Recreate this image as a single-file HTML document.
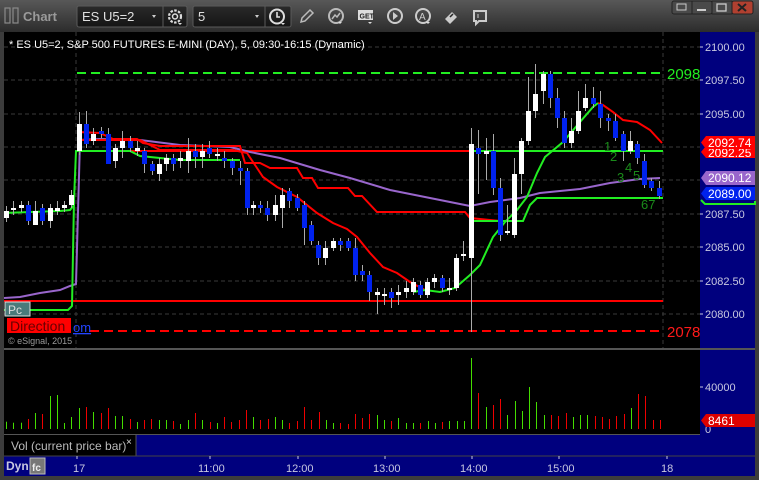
<!DOCTYPE html>
<html><head><meta charset="utf-8"><style>
html,body{margin:0;padding:0;background:#3a3a3a;width:759px;height:480px;overflow:hidden;font-family:"Liberation Sans",sans-serif}
svg{display:block}
</style></head><body>
<svg id="s" width="759" height="480" xmlns="http://www.w3.org/2000/svg" font-family="Liberation Sans, sans-serif">
<defs>
<linearGradient id="tb" x1="0" y1="0" x2="0" y2="1"><stop offset="0" stop-color="#585858"/><stop offset="1" stop-color="#2c2c2c"/></linearGradient>
<linearGradient id="bx" x1="0" y1="0" x2="0" y2="1"><stop offset="0" stop-color="#2a2a2a"/><stop offset="1" stop-color="#151515"/></linearGradient>
</defs>
<rect x="0" y="0" width="759" height="480" fill="#3c3c3c"/>
<rect x="0" y="0" width="759" height="32" fill="url(#tb)"/>
<!-- title -->
<rect x="5" y="8" width="5" height="15" fill="none" stroke="#8a8a8a" stroke-width="1.2"/>
<rect x="13" y="8" width="5" height="15" fill="none" stroke="#8a8a8a" stroke-width="1.2"/>
<text x="23" y="21" fill="#9a9a9a" font-size="13" font-weight="bold">Chart</text>
<rect x="77" y="6" width="110" height="21" rx="2" fill="url(#bx)" stroke="#5a5a5a"/>
<line x1="163" y1="6" x2="163" y2="27" stroke="#5a5a5a"/>
<text x="82" y="21" fill="#e0e0e0" font-size="13">ES U5=2</text>
<path d="M152 15l4 0-2 3z" fill="#ccc"/>
<circle cx="175" cy="16.5" r="6" fill="none" stroke="#ddd" stroke-width="2.2" stroke-dasharray="2.5 1.4"/><circle cx="175" cy="16.5" r="2.5" fill="none" stroke="#ddd" stroke-width="1.5"/>
<path d="M178 23l4 0-2 2z" fill="#ddd"/>
<rect x="193" y="6" width="98" height="21" rx="2" fill="url(#bx)" stroke="#5a5a5a"/>
<line x1="265" y1="6" x2="265" y2="27" stroke="#5a5a5a"/>
<text x="198" y="21" fill="#e0e0e0" font-size="13">5</text>
<path d="M255 15l4 0-2 3z" fill="#ccc"/>
<circle cx="277" cy="16.5" r="7" fill="none" stroke="#ddd" stroke-width="2"/><path d="M277 12v5h3" fill="none" stroke="#ddd" stroke-width="1.6"/>
<path d="M281 23l4 0-2 2z" fill="#ddd"/>
<path d="M301 22l1-4 8-8 3 3-8 8z" fill="none" stroke="#bbb" stroke-width="1.5"/>
<circle cx="336" cy="16" r="7" fill="none" stroke="#bbb" stroke-width="2"/><path d="M332 19l3-4 2 2 3-4" fill="none" stroke="#bbb" stroke-width="1.5"/><path d="M338 22l4 0-2 2z" fill="#ddd"/>
<rect x="358" y="10" width="15" height="10" fill="#ddd"/><text x="359.5" y="18.5" font-size="7" font-weight="bold" fill="#222">GET</text><path d="M368 22l4 0-2 2z" fill="#ddd"/>
<circle cx="395" cy="16" r="7" fill="none" stroke="#ccc" stroke-width="2"/><path d="M393 12v8l5-4z" fill="#ccc"/>
<circle cx="423" cy="16" r="7" fill="none" stroke="#ccc" stroke-width="2"/><text x="419" y="20" font-size="10" fill="#ccc">A</text><path d="M426 22l4 0-2 2z" fill="#ddd"/>
<path d="M445 19l7-7 5 5-7 7z" fill="#ccc"/><path d="M450 17l3-3" stroke="#222" stroke-width="1.5"/>
<path d="M474 11h12v10h-7l-3 3v-3h-2z" fill="none" stroke="#ccc" stroke-width="2"/><line x1="478" y1="14" x2="478" y2="18" stroke="#ccc"/>
<!-- window buttons -->
<rect x="672" y="1" width="40" height="13" rx="2" fill="#4a4a4a" stroke="#222"/>
<line x1="692" y1="1" x2="692" y2="14" stroke="#222"/>
<rect x="712" y="1" width="20" height="13" fill="#4a4a4a" stroke="#222"/>
<rect x="732" y="1" width="21" height="13" rx="2" fill="#b04030" stroke="#222"/>
<rect x="677" y="4" width="9" height="6" fill="none" stroke="#ccc"/>
<line x1="697" y1="10" x2="706" y2="10" stroke="#ccc" stroke-width="2"/>
<rect x="717" y="4" width="9" height="7" fill="none" stroke="#ccc" stroke-width="1.3"/>
<path d="M738 4l8 7M746 4l-8 7" stroke="#222" stroke-width="2"/>

<!-- chart panel -->
<rect x="4" y="32" width="696" height="316" fill="#000"/>
<rect x="700" y="32" width="55" height="424" fill="#00007e"/>
<rect x="755" y="32" width="4" height="448" fill="#3c3c3c"/>
<g stroke="#3a3a3a" stroke-dasharray="4 3" stroke-width="1">
<line x1="4" y1="47" x2="700" y2="47"/><line x1="4" y1="80" x2="700" y2="80"/><line x1="4" y1="114" x2="700" y2="114"/><line x1="4" y1="147" x2="700" y2="147"/><line x1="4" y1="180" x2="700" y2="180"/><line x1="4" y1="214" x2="700" y2="214"/><line x1="4" y1="247" x2="700" y2="247"/><line x1="4" y1="281" x2="700" y2="281"/><line x1="4" y1="314" x2="700" y2="314"/>
<line x1="76" y1="32" x2="76" y2="348"/><line x1="663" y1="32" x2="663" y2="348"/>
<line x1="4" y1="387" x2="700" y2="387"/><line x1="4" y1="429" x2="700" y2="429"/>
<line x1="76" y1="350" x2="76" y2="434"/><line x1="663" y1="350" x2="663" y2="434"/>
</g>
<text x="9" y="48" fill="#fff" font-size="11">* ES U5=2, S&amp;P 500 FUTURES E-MINI (DAY), 5, 09:30-16:15 (Dynamic)</text>

<g id="ind" fill="none" stroke-width="2">
<line x1="77" y1="73" x2="663" y2="73" stroke="#22ee22" stroke-dasharray="9 5"/>
<line x1="4" y1="301" x2="663" y2="301" stroke="#ff0000"/>
<line x1="90" y1="331" x2="663" y2="331" stroke="#ff0000" stroke-dasharray="9 5"/>
<line x1="77" y1="151" x2="663" y2="151" stroke="#ff0000"/>
<polyline stroke="#9966cc" points="4,298 20,297 40,293 60,290 70,286 76,284 80,140 100,139 140,140 180,145 230,147 250,152 280,158 320,170 350,178 390,190 430,198 460,204 470,206 490,202 520,198 540,193 580,189 610,183 640,179 660,178"/>
<polyline stroke="#ff0000" points="78,132 100,133 113,139 137,139 143,143 160,146 233,146 240,146 245,163 260,163 270,168 297,168 303,178 312,178 318,188 348,188 355,196 362,196 377,212 465,212 470,218 500,221"/>
<polyline stroke="#ff0000" points="80,140 140,140 160,150 233,150 247,153 263,177 277,187 297,197 317,213 333,223 347,229 357,237 370,253 383,267 397,273 410,282 425,290"/>
<polyline stroke="#ff0000" points="598,103 603,105 613,112 623,120 637,122 650,130 662,143"/>
<polyline stroke="#22ee22" points="4,310 68,310 72,306 74,200 76,151 130,151 140,156 180,160 225,160 240,160"/>
<polyline stroke="#22ee22" points="4,213 30,212 60,211 70,210 74,205"/>
<polyline stroke="#22ee22" points="413,292 425,290 440,292 455,288 470,275 480,265 493,237 505,222 517,210 527,197 537,173 545,157 563,142 580,122 593,107 598,103"/>
<polyline stroke="#22ee22" points="470,151 663,151"/>
<polyline stroke="#22ee22" points="470,221 523,221 530,205 537,198 663,198"/>
</g>
<g id="cand"></g>
<g fill="#1a8a1a" font-size="13">
<text x="604" y="151">1</text><text x="610" y="161">2</text><text x="617" y="182">3</text><text x="625" y="172">4</text><text x="633" y="180">5</text><text x="641" y="209">67</text>
</g>
<text x="667" y="79" fill="#22ee22" font-size="15">2098</text>
<text x="667" y="337" fill="#ff1a1a" font-size="15">2078</text>
<rect x="5" y="302" width="25" height="14" fill="#4a7a7a" stroke="#ddd"/>
<text x="8" y="314" fill="#ddd" font-size="12">Pc</text>
<rect x="7" y="318" width="64" height="15" fill="#ff0000"/>
<text x="10" y="331" fill="#600" font-size="14">Direction</text>
<text x="73" y="332" fill="#2244ff" font-size="13" text-decoration="underline">om</text>
<text x="8" y="344" fill="#9a9a9a" font-size="9">© eSignal, 2015</text>

<!-- axis labels -->
<g fill="#c8c8e0" font-size="11">
<text x="705" y="51">2100.00</text><text x="705" y="84">2097.50</text><text x="705" y="118">2095.00</text><text x="705" y="218">2087.50</text><text x="705" y="251">2085.00</text><text x="705" y="285">2082.50</text><text x="705" y="318">2080.00</text>
<text x="705" y="391">40000</text><text x="705" y="433">0</text>
</g>
<g stroke="#c8c8e0"><line x1="700" y1="47" x2="703" y2="47"/><line x1="700" y1="80" x2="703" y2="80"/><line x1="700" y1="114" x2="703" y2="114"/><line x1="700" y1="214" x2="703" y2="214"/><line x1="700" y1="247" x2="703" y2="247"/><line x1="700" y1="281" x2="703" y2="281"/><line x1="700" y1="314" x2="703" y2="314"/><line x1="700" y1="387" x2="703" y2="387"/></g>
<path d="M706 146h49v12h-49l-5-6z" fill="#ff0000"/><text x="708" y="157" fill="#fff" font-size="12">2092.25</text>
<path d="M706 136h49v13h-49l-5-6.5z" fill="#ff0000"/><text x="708" y="147" fill="#fff" font-size="12">2092.74</text>
<path d="M706 171h49v14h-49l-5-7z" fill="#9966cc"/><text x="708" y="182" fill="#fff" font-size="12">2090.12</text>
<path d="M706 187h49v13h-49l-5-6.5z" fill="#0022ee"/><text x="708" y="198" fill="#fff" font-size="12">2089.00</text>
<path d="M701 200l4 4h50v-3" fill="none" stroke="#22ee22" stroke-width="2"/>
<path d="M706 414h49v13h-49l-5-6.5z" fill="#dd0000"/><text x="708" y="425" fill="#fff" font-size="12">8461</text>

<!-- separators -->
<rect x="4" y="348" width="751" height="2" fill="#555"/>
<rect x="4" y="350" width="696" height="84" fill="#000"/>
<g id="vol"></g>
<rect x="4" y="434" width="696" height="1" fill="#555"/>
<rect x="4" y="435" width="132" height="21" fill="#000"/>
<rect x="136" y="435" width="564" height="21" fill="#00007e"/>
<line x1="136" y1="435" x2="136" y2="456" stroke="#555"/>
<text x="11" y="450" fill="#bbb" font-size="12">Vol (current price bar)</text>
<text x="126" y="445" fill="#ddd" font-size="10">×</text>
<rect x="4" y="456" width="751" height="20" fill="#00007e"/>
<line x1="4" y1="456" x2="755" y2="456" stroke="#444"/>
<text x="6" y="470" fill="#c8c8e0" font-size="12" font-weight="bold">Dyn</text>
<rect x="30" y="458" width="15" height="16" fill="#777" stroke="#bbb"/>
<text x="32" y="471" fill="#eee" font-size="10" font-weight="bold">fc</text>
<g fill="#c8c8e0" font-size="11">
<text x="73" y="472">17</text><text x="198" y="472">11:00</text><text x="286" y="472">12:00</text><text x="373" y="472">13:00</text><text x="460" y="472">14:00</text><text x="547" y="472">15:00</text><text x="661" y="472">18</text>
</g>
<g stroke="#c8c8e0"><line x1="77" y1="456" x2="77" y2="459"/><line x1="210" y1="456" x2="210" y2="459"/><line x1="298" y1="456" x2="298" y2="459"/><line x1="385" y1="456" x2="385" y2="459"/><line x1="472" y1="456" x2="472" y2="459"/><line x1="559" y1="456" x2="559" y2="459"/><line x1="667" y1="456" x2="667" y2="459"/></g>
</svg>
<script>
var C=[[6,211,218,206,222,'w'],[13,208,210,201,215,'w'],[21,205,208,201,212,'w'],[28,205,221,201,225,'b'],[35,211,225,201,225,'w'],[42,208,221,204,225,'b'],[50,208,221,204,228,'w'],[57,208,211,201,215,'w'],[64,205,208,201,212,'w'],[71,195,205,190,208,'w'],
[79,124,151,112,155,'w'],[86,124,144,111,148,'b'],[93,134,141,128,145,'w'],[101,131,134,127,138,'b'],[108,134,164,128,164,'b'],[115,148,161,144,168,'w'],[122,141,148,131,158,'w'],[130,141,148,136,152,'b'],[137,148,151,141,156,'w'],[144,151,164,148,173,'b'],[152,164,171,161,175,'b'],[159,164,174,158,181,'w'],[166,158,164,154,171,'w'],[173,158,164,154,171,'b'],[180,158,161,151,168,'w'],[188,151,161,138,173,'w'],[195,151,157,144,168,'b'],[202,151,157,144,168,'w'],[209,148,154,141,158,'b'],[217,154,155,148,161,'w'],[224,158,161,151,168,'b'],[232,161,168,158,175,'b'],[240,168,171,161,185,'b'],[247,171,208,168,215,'b'],[253,205,208,201,215,'w'],[260,205,208,201,213,'b'],[267,208,215,201,221,'b'],[275,205,215,195,221,'w'],[282,195,208,188,228,'w'],[289,191,201,188,208,'b'],[297,198,208,194,211,'b'],[304,205,228,201,245,'b'],[311,225,241,221,245,'b'],[318,245,258,241,265,'b'],[325,248,258,241,265,'w'],[333,241,248,238,251,'w'],[340,241,245,238,251,'b'],[348,241,248,238,251,'b'],[355,248,275,238,281,'b'],[362,271,275,265,281,'b'],[369,275,292,271,301,'b'],[377,292,295,288,314,'w'],[384,294,296,288,305,'w'],[391,292,298,288,308,'b'],[398,292,295,285,305,'w'],[406,288,292,281,298,'w'],[413,282,292,278,295,'w'],[420,285,295,281,298,'b'],[427,282,295,278,298,'w'],[434,278,282,274,288,'w'],[442,278,288,275,292,'b'],[449,288,290,278,295,'w'],[456,258,288,254,291,'w'],[463,254,256,241,261,'w'],[471,144,258,128,332,'w'],[478,148,154,130,194,'b'],[486,151,154,138,180,'w'],[493,151,188,134,195,'b'],[500,188,235,178,241,'b'],[507,231,233,205,235,'w'],[514,174,235,158,238,'w'],[521,141,174,138,194,'w'],[528,111,141,77,145,'w'],[535,94,111,64,118,'w'],[543,74,91,71,104,'w'],[550,74,98,71,108,'b'],[557,98,118,88,128,'b'],[564,118,143,111,148,'b'],[571,131,143,118,148,'w'],[578,111,131,91,134,'w'],[585,98,108,84,111,'w'],[593,98,104,87,108,'b'],[600,104,118,91,128,'b'],[608,118,121,114,131,'b'],[615,121,138,114,141,'b'],[623,134,151,131,161,'b'],[630,141,151,131,154,'w'],[637,144,158,141,164,'b'],[644,161,185,154,188,'b'],[651,181,188,178,191,'b'],[659,188,196,181,199,'b']];
var h='';C.forEach(function(c){var col=c[5]=='w'?'#fff':'#0022ee';h+='<line x1="'+(c[0]+.5)+'" y1="'+c[3]+'" x2="'+(c[0]+.5)+'" y2="'+c[4]+'" stroke="#aaa"/>';var hh=Math.max(2,c[2]-c[1]);h+='<rect x="'+(c[0]-2)+'" y="'+c[1]+'" width="5" height="'+hh+'" fill="'+col+'"/>';});
document.getElementById('cand').innerHTML=h;
var L=[[18,395,'g'],[40,398,'g'],[64,398,'g'],[85,387,'r'],[106,369,'g'],[127,372,'r'],[151,318,'g'],[172,315,'g'],[193,399,'g'],[214,381,'g'],[238,354,'g'],[259,351,'r'],[280,366,'g'],[304,369,'r'],[325,354,'r'],[346,378,'g'],[367,378,'g'],[391,387,'r'],[412,396,'g'],[433,390,'r'],[454,387,'r'],[478,390,'g'],[499,390,'g'],[520,393,'r']];
var R=[[0,222,'g'],[25,210,'g'],[46,189,'r'],[67,210,'g'],[91,216,'r'],[112,219,'g'],[133,201,'r'],[154,216,'r'],[178,210,'r'],[199,180,'r'],[220,201,'g'],[241,210,'r'],[265,207,'r'],[286,201,'g'],[307,210,'g'],[328,219,'r'],[352,213,'r'],[373,171,'r'],[394,210,'r'],[418,186,'r'],[439,210,'g'],[460,219,'g'],[481,219,'r'],[505,222,'r'],[526,192,'r'],[547,204,'r'],[568,192,'r'],[592,195,'g'],[613,210,'g'],[634,213,'r'],[655,204,'g'],[679,219,'g'],[700,219,'g'],[721,219,'r'],[745,213,'g'],[766,219,'g'],[787,216,'r'],[808,213,'g'],[832,213,'g'],[853,213,'g'],[874,24,'g'],[895,129,'r'],[919,171,'g'],[940,165,'r'],[961,147,'r'],[982,195,'g'],[1006,153,'g'],[1027,183,'g'],[1048,111,'g'],[1069,156,'g'],[1093,195,'g'],[1114,195,'r'],[1135,198,'r'],[1159,189,'r'],[1180,201,'g'],[1201,195,'g'],[1222,195,'g'],[1246,198,'r'],[1267,201,'r'],[1288,207,'r'],[1309,198,'r'],[1333,192,'r'],[1354,174,'g'],[1375,132,'r'],[1396,138,'r'],[1420,210,'r'],[1441,210,'r']];
var v='';function bar(x,y,c){v+='<rect x="'+Math.round(x)+'" y="'+y.toFixed(1)+'" width="1" height="'+(429-y).toFixed(1)+'" fill="'+(c=='g'?'#44dd00':'#ee0000')+'"/>';}
L.forEach(function(b){bar(b[0]/3,290+b[1]/3,b[2]);});R.forEach(function(b){bar(180+b[0]/3,350+b[1]/3,b[2]);});
document.getElementById('vol').innerHTML=v;
</script>
</body></html>
